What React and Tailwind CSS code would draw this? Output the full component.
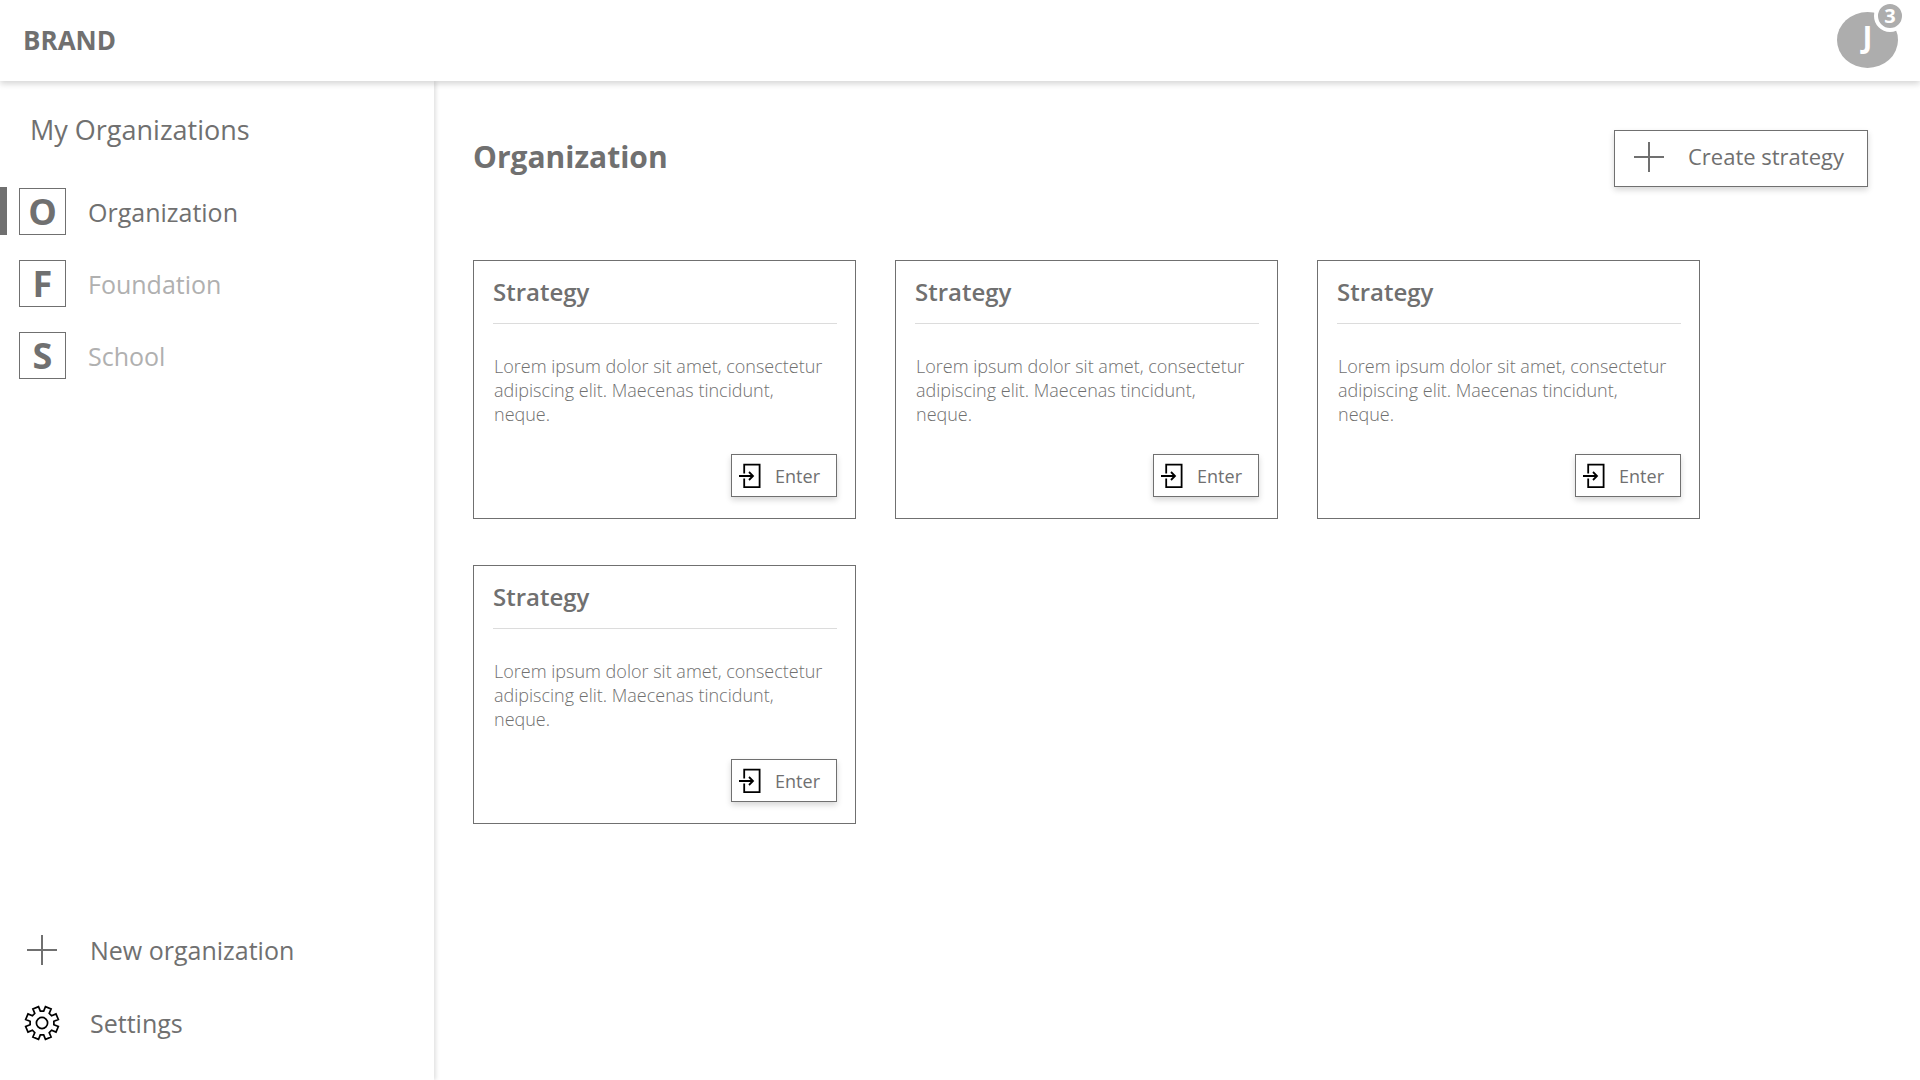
const organizations = [
  { name: "Organization", active: true },
  { name: "Foundation", active: false },
  { name: "School", active: false },
];

const strategies = [1, 2, 3, 4];

function PlusIcon() {
  return (
    <svg className="size-[30px] shrink-0" viewBox="0 0 30 30" fill="none" stroke="#707070" strokeWidth="2" aria-hidden="true">
      <path d="M15 0V30M0 15H30" />
    </svg>
  );
}

const gearPoints = Array.from({ length: 8 }, (_, i) => {
  const base = i * 45 + 22.5;
  return [
    [-14.5, 12],
    [-10.5, 16.7],
    [10.5, 16.7],
    [14.5, 12],
  ].map(([offset, radius]) => {
    const angle = ((base + offset) * Math.PI) / 180;
    return `${(18 + radius * Math.cos(angle)).toFixed(2)},${(18 + radius * Math.sin(angle)).toFixed(2)}`;
  });
})
  .flat()
  .join(" ");

function GearIcon() {
  return (
    <svg className="size-9 shrink-0" viewBox="0 0 36 36" fill="none" stroke="#000" strokeWidth="1.7" aria-hidden="true">
      <polygon points={gearPoints} />
      <circle cx="18" cy="18" r="5.6" />
    </svg>
  );
}

function EnterIcon() {
  return (
    <svg className="h-[26px] w-[22px] shrink-0" viewBox="0 0 22 26" fill="none" stroke="#000" strokeWidth="1.8" aria-hidden="true">
      <path d="M5.2 10.5V1.6H20.6V24.2H5.2V15.5M0 13H14M10 9L14 13L10 17" />
    </svg>
  );
}

function StrategyCard() {
  return (
    <article className="border border-[#707070] pt-3.5 pr-[18px] pb-[21px] pl-[19px]">
      <h2 className="border-b border-[#dcdcdc] pb-3.5 text-2xl leading-[34px] font-semibold">Strategy</h2>
      <p className="mt-[30px] pr-3 pl-px text-lg leading-6 font-light">
        Lorem ipsum dolor sit amet, consectetur adipiscing elit. Maecenas tincidunt, neque.
      </p>
      <div className="mt-7 flex justify-end">
        <button type="button" className="flex h-[43px] items-center gap-3.5 border border-[#707070] bg-white pr-4 pl-[7px] text-lg shadow-[0_3px_6px_rgba(0,0,0,0.16)]">
          <EnterIcon />
          Enter
        </button>
      </div>
    </article>
  );
}

export default function App() {
  return (
    <div className="flex min-h-screen flex-col bg-white font-['Open_Sans',sans-serif] text-[#707070]">
      <header className="relative z-10 flex h-[81px] items-center justify-between bg-white pr-[22px] pb-0.5 pl-[23px] shadow-[0_3px_6px_rgba(0,0,0,0.16)]">
        <a href="#" className="pt-0.5 text-[26px] font-bold">BRAND</a>
        <button type="button" aria-label="Account J, 3 notifications" className="relative flex h-14 w-[61px] items-center justify-center rounded-[50%] bg-[#adadad] pb-1.5 text-[30px] font-bold text-white">
          J
          <span className="absolute -top-3 -right-2 flex size-8 items-center justify-center rounded-full border-4 border-white bg-[#adadad] text-xl font-bold">3</span>
        </button>
      </header>

      <div className="flex grow">
        <aside className="flex w-[434px] shrink-0 flex-col justify-between pt-7 pb-[39px] shadow-[2px_0_4px_rgba(0,0,0,0.12)]">
          <div>
            <h2 className="pl-[30px] text-[27px] leading-[42px]">My Organizations</h2>
            <nav className="mt-9 flex flex-col gap-6">
              {organizations.map(({ name, active }) => (
                <a key={name} href="#" className="flex h-12 items-center">
                  <span className={active ? "h-12 w-[7px] bg-[#707070]" : "h-12 w-[7px]"} />
                  <span className="ml-3 flex size-[47px] items-center justify-center border border-[#707070] pt-0.5 text-[36px] leading-none font-bold">
                    {name[0]}
                  </span>
                  <span className={active ? "ml-[22px] pt-1 text-[25px]" : "ml-[22px] pt-1 text-[25px] text-[#b0b0b0]"}>{name}</span>
                </a>
              ))}
            </nav>
          </div>
          <div className="flex flex-col gap-[37px] pl-6 text-[25px] leading-9">
            <button type="button" className="flex items-center gap-[30px] text-left">
              <span className="flex w-9 justify-center">
                <PlusIcon />
              </span>
              New organization
            </button>
            <button type="button" className="flex items-center gap-[30px] text-left">
              <GearIcon />
              Settings
            </button>
          </div>
        </aside>

        <main className="grow pt-[49px] pr-[52px] pl-[39px]">
          <div className="flex items-start justify-between">
            <h1 className="pt-1.5 text-[30px] leading-[42px] font-bold">Organization</h1>
            <button type="button" className="flex h-[57px] items-center gap-6 border border-[#707070] bg-white pr-[23px] pb-1 pl-[19px] text-[22px] shadow-[0_3px_6px_rgba(0,0,0,0.16)]">
              <PlusIcon />
              Create strategy
            </button>
          </div>
          <div className="mt-[73px] grid grid-cols-[repeat(auto-fill,383px)] gap-x-[39px] gap-y-[46px]">
            {strategies.map((id) => (
              <StrategyCard key={id} />
            ))}
          </div>
        </main>
      </div>
    </div>
  );
}
